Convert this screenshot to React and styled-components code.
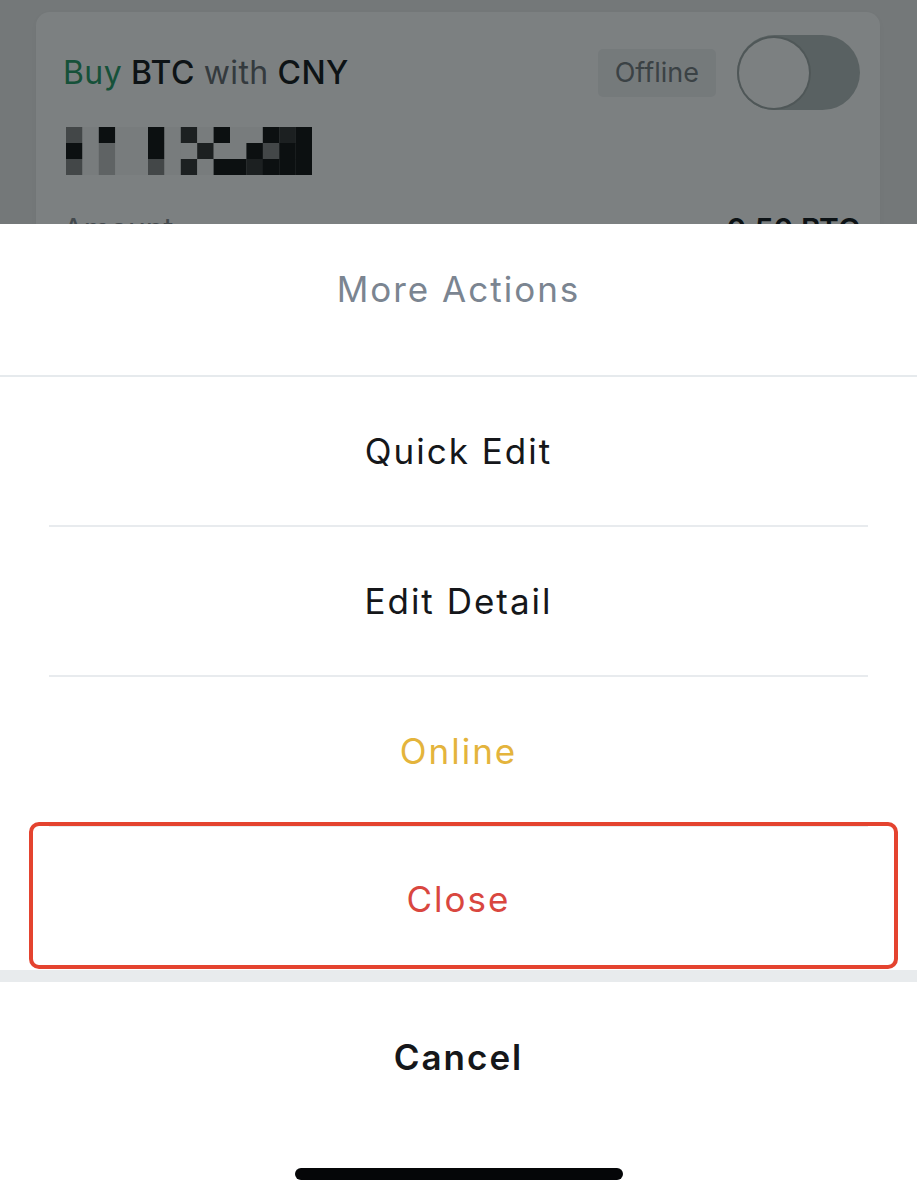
import React from 'react';
import styled, { createGlobalStyle } from 'styled-components';

const GlobalStyle = createGlobalStyle`
  html, body {
    margin: 0;
    padding: 0;
    background: #efefef;
  }
  body {
    font-family: Inter, "Noto Sans", "Liberation Sans", sans-serif;
  }
`;

const Screen = styled.div`
  position: relative;
  width: 917px;
  height: 1200px;
  overflow: hidden;
  background: #efefef;
`;

const Page = styled.div`
  padding: 12px 37px 0 36px;
`;

const Card = styled.div`
  background: #ffffff;
  border-radius: 14px;
  padding: 23px 20px 30px 27px;
  box-shadow: 0 2px 10px rgba(0, 0, 0, 0.04);
`;

const CardHead = styled.div`
  display: flex;
  align-items: center;
  justify-content: space-between;
`;

const Title = styled.div`
  font-size: 32px;
  color: #1c1f23;
  font-weight: 500;
  letter-spacing: 0.4px;
`;

const Word = styled.span`
  color: ${({ tone }) => (tone === 'buy' ? '#2f9e6c' : tone === 'muted' ? '#6b7075' : '#1c1f23')};
  font-weight: ${({ tone }) => (tone ? 400 : 500)};
`;

const Controls = styled.div`
  display: flex;
  align-items: center;
  gap: 21px;
`;

const Badge = styled.div`
  height: 48px;
  padding: 0 17px;
  display: flex;
  align-items: center;
  border-radius: 5px;
  background: #f1f2f3;
  color: #7a7f84;
  font-size: 27px;
`;

const Track = styled.div`
  width: 123px;
  height: 75px;
  border-radius: 38px;
  background: #b8c0bf;
  display: flex;
  align-items: center;
  padding: 0 2px;
  box-sizing: border-box;
`;

const Knob = styled.div`
  width: 70px;
  height: 70px;
  border-radius: 50%;
  background: #ffffff;
  box-shadow: 0 0 0 2px #a3abaa;
`;

const Mosaic = styled.svg`
  display: block;
  margin: 17px 0 0 3px;
`;

const InfoRow = styled.div`
  display: flex;
  justify-content: space-between;
  margin-top: 36px;
  font-size: 30px;
  color: #8a8f94;
`;

const InfoValue = styled.span`
  color: #1c1f23;
  font-weight: 600;
`;

const Backdrop = styled.div`
  position: absolute;
  inset: 0;
  background: rgba(0, 8, 10, 0.515);
`;

const Sheet = styled.div`
  position: absolute;
  left: 0;
  right: 0;
  top: 224px;
  bottom: 0;
  background: #ffffff;
  display: flex;
  flex-direction: column;
`;

const SheetTitle = styled.div`
  height: 153px;
  box-sizing: border-box;
  padding-bottom: 22px;
  display: flex;
  align-items: center;
  justify-content: center;
  border-bottom: 2px solid #e6eaed;
  font-size: 35px;
  color: #7b8591;
  letter-spacing: 2px;
`;

const colors = {
  default: '#15171a',
  warn: '#e4b43c',
  danger: '#d9473f',
};

const Action = styled.div`
  position: relative;
  height: ${({ h }) => h || 148}px;
  display: flex;
  align-items: center;
  justify-content: center;
  font-size: 35px;
  letter-spacing: 2px;
  color: ${({ variant }) => colors[variant || 'default']};
  font-weight: ${({ bold }) => (bold ? 600 : 400)};
`;

const Highlight = styled.div`
  position: absolute;
  top: -5px;
  bottom: 1px;
  left: 29px;
  right: 19px;
  border: 4px solid #e4432f;
  border-radius: 10px;
  pointer-events: none;
`;

const Divider = styled.div`
  height: 2px;
  margin: 0 49px;
  background: #e8ebee;
`;

const Gap = styled.div`
  height: 12px;
  background: #e8ebed;
`;

const HomeArea = styled.div`
  flex: 1;
  display: flex;
  justify-content: center;
  padding-top: 36px;
`;

const HomeBar = styled.div`
  width: 328px;
  height: 12px;
  border-radius: 6px;
  background: #050608;
`;

const K = '#1a1a1a';
const D = '#3a3a3a';
const M = '#8a8a8a';
const L = '#c4c4c4';
const W = '#f6f6f6';

const mosaic = [
  [M, W, K, W, W, K, W, D, W, K, W, W, K, D, K],
  [K, W, L, W, W, K, W, W, D, W, W, K, M, K, K],
  [M, W, L, W, W, M, W, D, W, K, K, D, K, K, K],
];

const MosaicBlock = () => (
  <Mosaic width="246" height="48" viewBox="0 0 246 48">
    {mosaic.map((row, r) =>
      row.map((c, i) => (
        <rect key={`${r}-${i}`} x={i * 16.4} y={r * 16} width="16.6" height="16.2" fill={c} />
      ))
    )}
  </Mosaic>
);

const App = () => (
  <Screen>
    <GlobalStyle />
    <Page>
      <Card>
        <CardHead>
          <Title>
            <Word tone="buy">Buy</Word> BTC <Word tone="muted">with</Word> CNY
          </Title>
          <Controls>
            <Badge>Offline</Badge>
            <Track>
              <Knob />
            </Track>
          </Controls>
        </CardHead>
        <MosaicBlock />
        <InfoRow>
          <span>Amount</span>
          <InfoValue>0.50 BTC</InfoValue>
        </InfoRow>
      </Card>
    </Page>
    <Backdrop />
    <Sheet>
      <SheetTitle>More Actions</SheetTitle>
      <Action>Quick Edit</Action>
      <Divider />
      <Action>Edit Detail</Action>
      <Divider />
      <Action variant="warn">Online</Action>
      <Divider />
      <Action variant="danger" h={143}>
        Close
        <Highlight />
      </Action>
      <Gap />
      <Action bold h={150}>Cancel</Action>
      <HomeArea>
        <HomeBar />
      </HomeArea>
    </Sheet>
  </Screen>
);

export default App;
